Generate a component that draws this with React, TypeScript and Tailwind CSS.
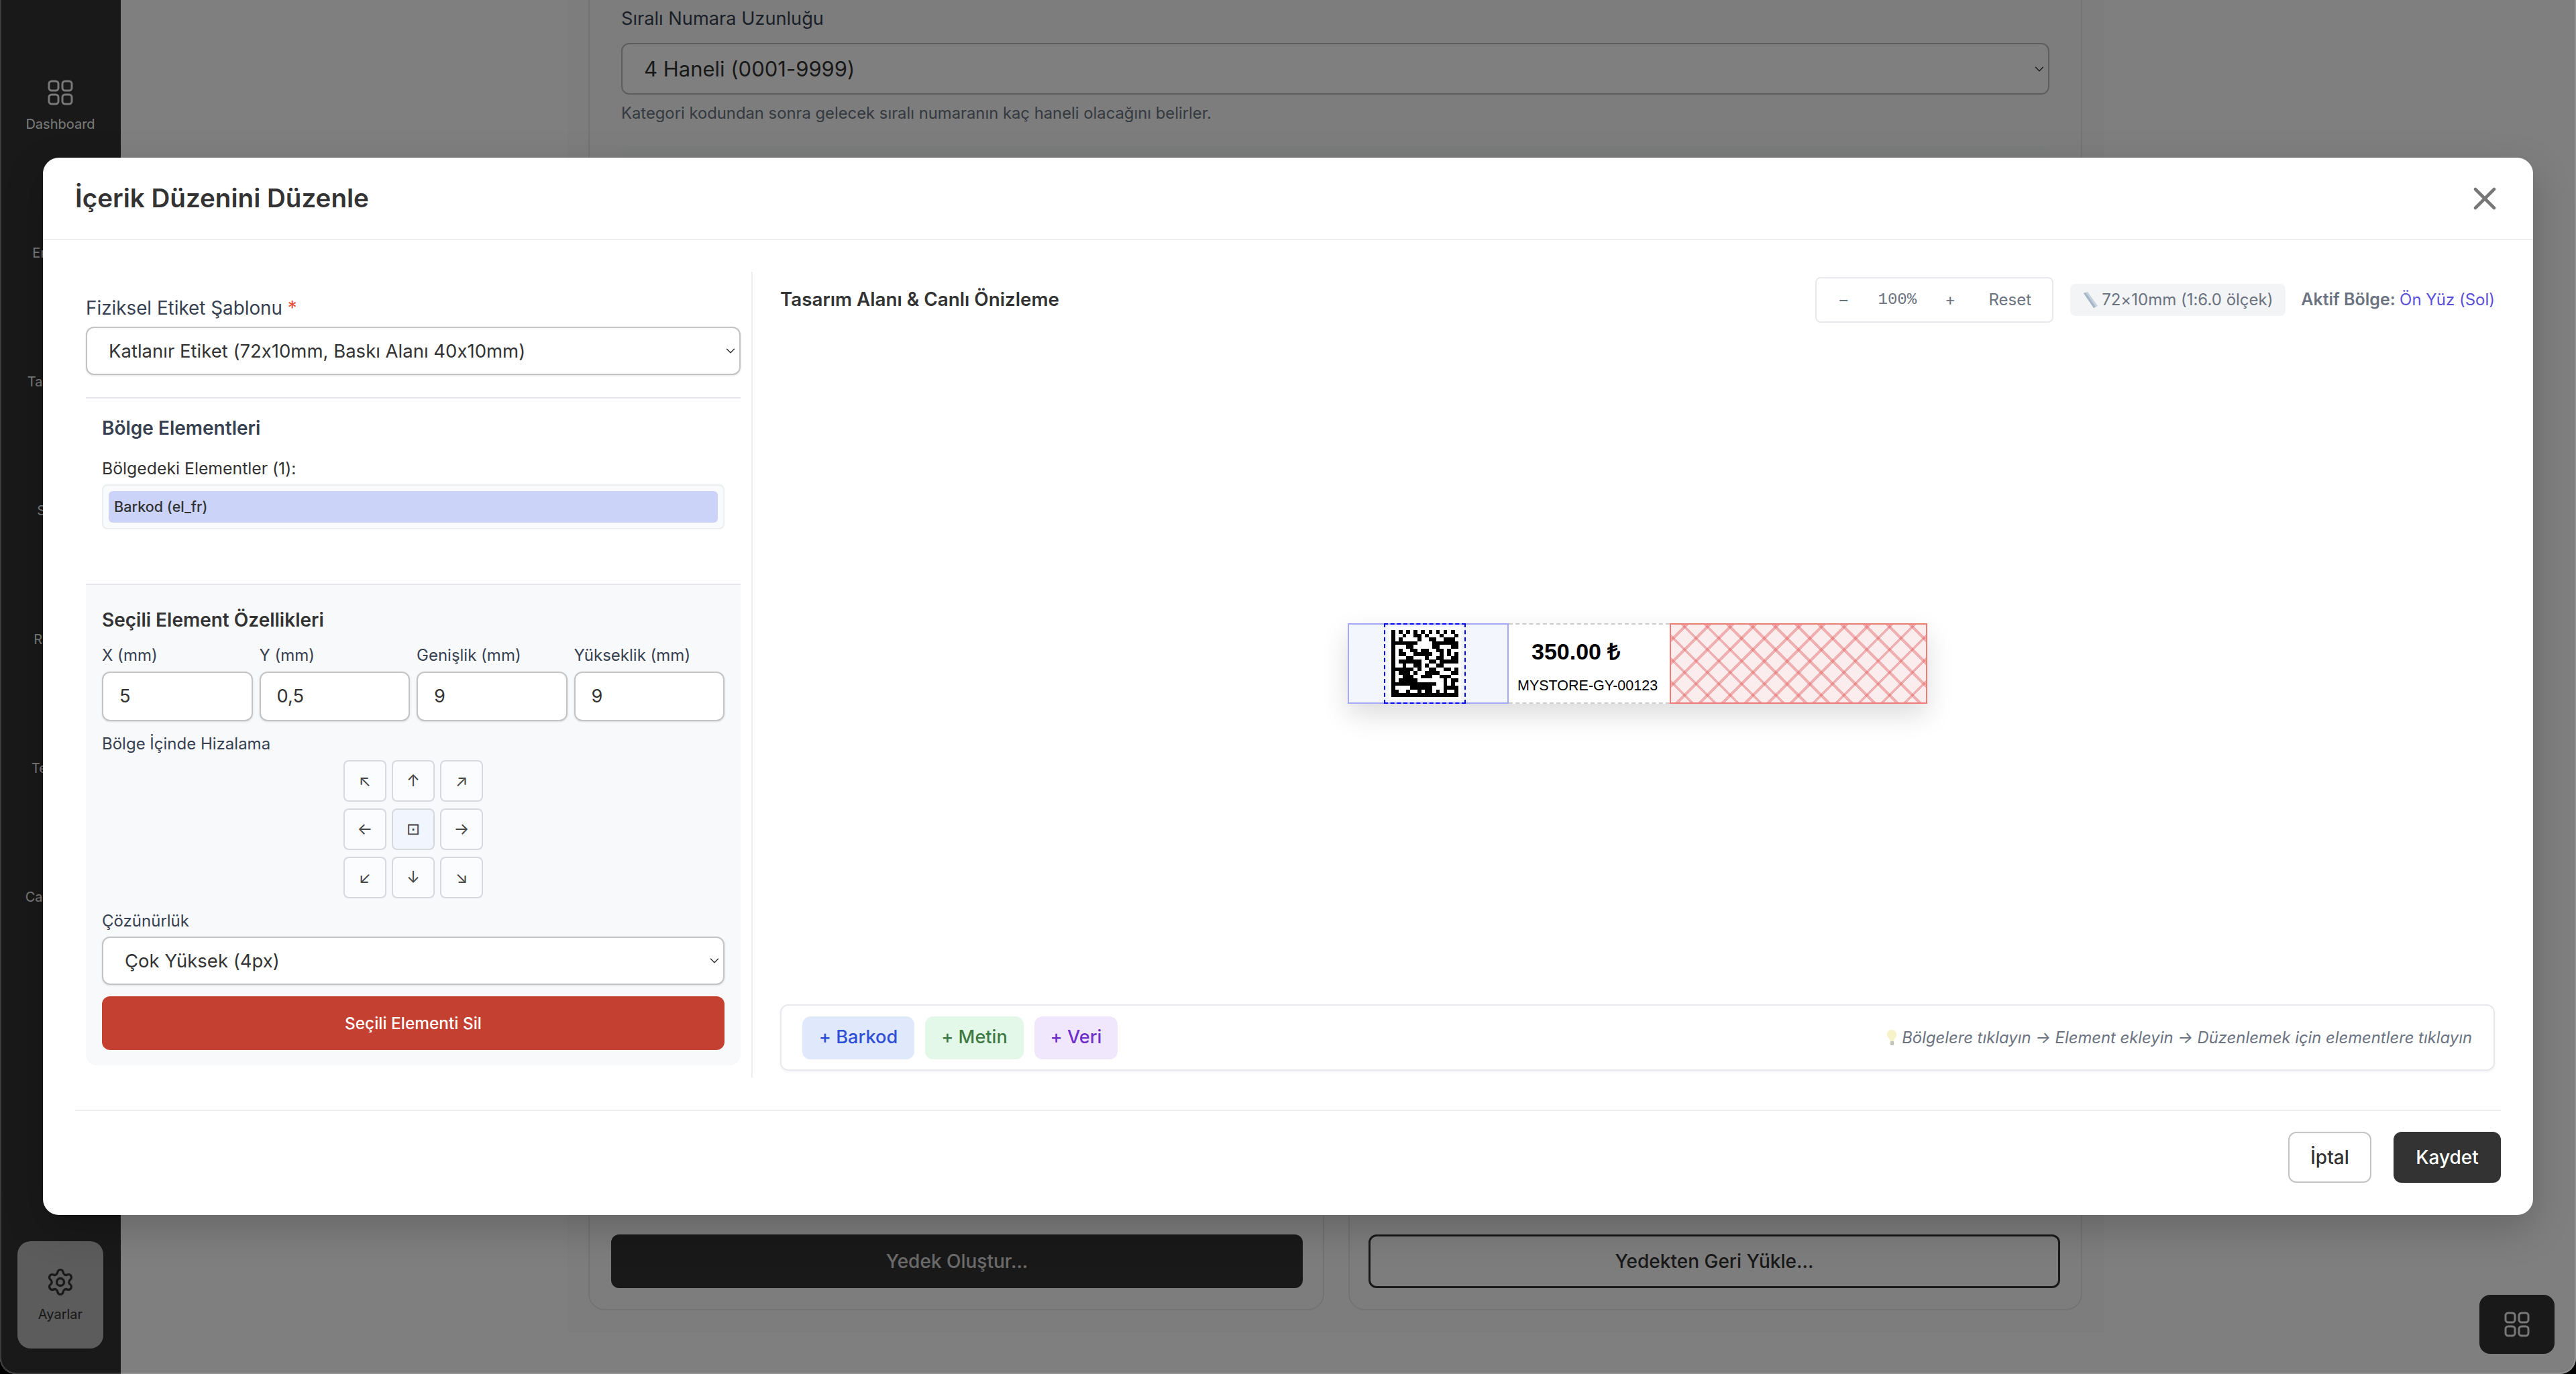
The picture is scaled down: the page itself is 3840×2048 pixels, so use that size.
import React from "react";
import { X, Settings, ChevronDown } from "lucide-react";

const matrix = [
  "101010101010101010",
  "100100110100010001",
  "101000010011001110",
  "111111100001111111",
  "100011000001100011",
  "101001101100110100",
  "101100111110010101",
  "100011000100110011",
  "101111110011011111",
  "100100110100110000",
  "111111010011001101",
  "101110100111100011",
  "100111001110011100",
  "101111100000001011",
  "111111111111001010",
  "100001111110001111",
  "110010010110101001",
  "111111111111111111",
];

function DataMatrix() {
  return (
    <svg width="100" height="100" viewBox="0 0 18 18" shapeRendering="crispEdges">
      {matrix.map((row, y) =>
        row.split("").map((c, x) => (c === "1" ? <rect key={x + "-" + y} x={x} y={y} width="1.02" height="1.02" fill="#000" /> : null))
      )}
    </svg>
  );
}

function GridIcon({ color = "#f0f0f0" }: { color?: string }) {
  return (
    <svg width="38" height="38" viewBox="0 0 38 38" fill="none" stroke={color} strokeWidth="3">
      <rect x="2" y="2" width="14" height="14" rx="4" />
      <rect x="22" y="2" width="14" height="14" rx="4" />
      <rect x="2" y="22" width="14" height="14" rx="4" />
      <rect x="22" y="22" width="14" height="14" rx="4" />
    </svg>
  );
}

function NavItem({ label }: { label: string }) {
  return (
    <div className="h-[192px] flex flex-col items-center justify-center gap-[16px]">
      <GridIcon />
      <span className="text-[20px] leading-[24px] text-[#f5f5f5] whitespace-nowrap">{label}</span>
    </div>
  );
}

function SelectBox({ text }: { text: string }) {
  return (
    <div className="h-[72px] w-full bg-white border-2 border-[#c4c4c4] rounded-[12px] flex items-center justify-between pl-[32px] pr-[2px] shadow-[0_1px_3px_rgba(0,0,0,0.12)]">
      <span className="text-[27.5px] pt-[2px] text-[#333]">{text}</span>
      <ChevronDown size={22} strokeWidth={1.6} className="text-[#333]" />
    </div>
  );
}

const arrows = ["↖", "↑", "↗", "←", "⊡", "→", "↙", "↓", "↘"];

function Field({ label, value }: { label: string; value: string }) {
  return (
    <div className="flex-1 min-w-0">
      <div className="text-[24px] leading-[28px] text-[#374151] whitespace-nowrap">{label}</div>
      <div className="mt-[10px] h-[74px] bg-white border-2 border-[#c4c4c4] rounded-[12px] flex items-center px-[24px] text-[27.2px] text-[#333] shadow-[0_1px_3px_rgba(0,0,0,0.12)]">
        {value}
      </div>
    </div>
  );
}

export default function App() {
  return (
    <div className="w-screen h-screen bg-black overflow-hidden font-['Inter','Noto_Sans',sans-serif] [font-feature-settings:'calt'_0]">
      <div className="relative w-full h-full rounded-b-[24px] overflow-hidden flex bg-white">
        {/* sidebar */}
        <aside className="w-[180px] h-full bg-[#333] flex flex-col pt-[62px] shrink-0">
          <NavItem label="Dashboard" />
          <NavItem label="Envanter" />
          <NavItem label="Tasarımlar" />
          <NavItem label="Satışlar" />
          <NavItem label="Raporlar" />
          <NavItem label="Tedarikçi" />
          <NavItem label="Cari Hesap" />
          <div className="mt-auto mb-[38px] mx-[26px] h-[160px] rounded-[20px] bg-[#b8b8b8] flex flex-col items-center justify-center gap-[14px] text-[#333]">
            <Settings size={44} strokeWidth={1.8} />
            <span className="text-[20px] leading-[24px]">Ayarlar</span>
          </div>
        </aside>

        {/* page behind */}
        <main className="flex-1 h-full">
          <div className="ml-[665px] w-[2291px] h-[1986px] bg-[#fafbfa] px-[32px] pb-[33px] flex flex-col justify-between">
            <div className="border-x-2 border-[#e5e7eb] px-[47px] pt-[10px] h-[300px]">
              <div className="text-[27.2px] leading-[36px] text-[#374151]">Sıralı Numara Uzunluğu</div>
              <div className="mt-[18px] h-[77px] border-2 border-[#bbb] rounded-[12px] flex items-center justify-between pl-[32px] pr-[2px] text-[31px] text-[#333] bg-white">
                <span className="pt-[2px]">4 Haneli (0001-9999)</span>
                <ChevronDown size={22} strokeWidth={1.6} />
              </div>
              <div className="mt-[14px] text-[23.8px] leading-[28px] text-[#6b7280]">Kategori kodundan sonra gelecek sıralı numaranın kaç haneli olacağını belirler.</div>
              <div className="mt-[34px] h-[80px] bg-[#f7f8f8] rounded-[12px]" />
            </div>
            <div className="flex gap-[36px] h-[300px]">
              <div className="flex-1 border-2 border-[#e5e7eb] rounded-[24px] pl-[32px] pr-[30px] flex flex-col justify-end pb-[31px]">
                <div className="h-[80px] rounded-[12px] bg-[#333] flex items-center justify-center text-[28px] font-medium text-white/80">Yedek Oluştur...</div>
              </div>
              <div className="flex-1 border-2 border-[#e5e7eb] rounded-[24px] pl-[28px] pr-[31px] flex flex-col justify-end pb-[31px]">
                <div className="h-[80px] rounded-[12px] border-[3px] border-[#333] flex items-center justify-center text-[28px] font-medium text-[#333]">Yedekten Geri Yükle...</div>
              </div>
            </div>
          </div>
        </main>

        <div className="absolute right-[32px] bottom-[30px] w-[112px] h-[88px] rounded-[16px] bg-[#333] flex items-center justify-center">
          <GridIcon />
        </div>

        {/* overlay */}
        <div className="absolute inset-0 bg-black/50 flex items-center justify-center pb-[2px]">
          <div className="w-[3712px] h-[1576px] bg-white rounded-[24px] flex flex-col shadow-[0_20px_60px_rgba(0,0,0,0.2)]">
            <header className="h-[123px] shrink-0 border-b-2 border-[#eeeeee] flex items-center justify-between pl-[48px] pr-[44px]">
              <h2 className="text-[38.6px] font-semibold text-[#333]">İçerik Düzenini Düzenle</h2>
              <X size={56} strokeWidth={2} className="text-[#777]" />
            </header>

            <div className="mx-[48px] mt-[47px] h-[1201px] flex shrink-0">
              {/* left column */}
              <div className="w-[1010px] shrink-0 border-r-2 border-[#eeeeee] px-[16px] pt-[37px]">
                <div className="text-[27.8px] leading-[34px] text-[#374151]">
                  Fiziksel Etiket Şablonu <span className="text-[#e74c3c]">*</span>
                </div>
                <div className="mt-[11px]">
                  <SelectBox text="Katlanır Etiket (72x10mm, Baskı Alanı 40x10mm)" />
                </div>
                <div className="mt-[33px] h-[278px] border-t-2 border-[#e5e7eb] px-[24px] pt-[27px]">
                  <div className="text-[28px] leading-[34px] font-semibold text-[#374151]">Bölge Elementleri</div>
                  <div className="mt-[28px] text-[24.8px] leading-[30px] text-[#333]">Bölgedeki Elementler (1):</div>
                  <div className="mt-[9px] h-[67px] border-2 border-[#eceef0] rounded-[8px] bg-[#f9fafb] p-[8px]">
                    <div className="h-[47px] rounded-[6px] bg-[#cbd3f9] flex items-center px-[8px] text-[21.6px] font-medium text-[#333]">Barkod (el_fr)</div>
                  </div>
                </div>
                <div className="border-t-2 border-[#e5e7eb] bg-[#f8f9fb] rounded-b-[16px] px-[24px] pt-[35px] pb-[23px]">
                  <div className="text-[28px] leading-[34px] font-semibold text-[#333]">Seçili Element Özellikleri</div>
                  <div className="mt-[22px] flex gap-[10px]">
                    <Field label="X (mm)" value="5" />
                    <Field label="Y (mm)" value="0,5" />
                    <Field label="Genişlik (mm)" value="9" />
                    <Field label="Yükseklik (mm)" value="9" />
                  </div>
                  <div className="mt-[20px] text-[24px] leading-[28px] text-[#374151]">Bölge İçinde Hizalama</div>
                  <div className="mt-[10px] grid grid-cols-[64px_64px_64px] auto-rows-[62px] gap-x-[8px] gap-y-[10px] justify-center">
                    {arrows.map((a, i) => (
                      <div key={a} className={`border-2 border-[#d5d8de] rounded-[8px] flex items-center justify-center text-[24px] text-[#444] ${i === 4 ? "bg-[#f1f5fe]" : "bg-[#fbfcfe]"}`}>
                        {a}
                      </div>
                    ))}
                  </div>
                  <div className="mt-[20px] text-[24px] leading-[28px] text-[#374151]">Çözünürlük</div>
                  <div className="mt-[9px]">
                    <SelectBox text="Çok Yüksek (4px)" />
                  </div>
                  <div className="mt-[17px] h-[80px] rounded-[12px] bg-[#c44030] flex items-center justify-center text-[24.4px] font-medium text-white">Seçili Elementi Sil</div>
                </div>
              </div>

              {/* right column */}
              <div className="flex-1 min-w-0 pl-[41px] pr-[9px] flex flex-col">
                <div className="mt-[8px] h-[68px] flex items-center justify-between shrink-0">
                  <div className="text-[27.8px] font-semibold text-[#333]">Tasarım Alanı &amp; Canlı Önizleme</div>
                  <div className="flex items-center">
                    <div className="w-[355px] h-[68px] border-2 border-[#e8e8ee] rounded-[8px] flex items-center text-[24px] text-[#6b7280]">
                      <span className="w-[80px] text-center">–</span>
                      <span className="w-[80px] text-center font-['Liberation_Mono',monospace]">100%</span>
                      <span className="w-[78px] text-center">+</span>
                      <span className="w-[100px] text-center">Reset</span>
                    </div>
                    <div className="ml-[25px] h-[48px] w-[321px] bg-[#f3f4f6] rounded-[8px] flex items-center justify-center gap-[4px] text-[24px] text-[#6b7280]">
                      <svg width="24" height="26" viewBox="0 0 24 26">
                        <polygon points="1,3 7,1 22,22 16,25" fill="#c4d0dc" />
                        <polygon points="1,3 4,2 19,23.5 16,25" fill="#a4b6c8" />
                      </svg>
                      <span>72×10mm (1:6.0 ölçek)</span>
                    </div>
                    <div className="ml-[23px] text-[24px] text-[#6b7280] whitespace-nowrap">
                      <span className="font-semibold text-[25px]">Aktif Bölge: </span>
                      <span className="text-[#5b4fd8]">Ön Yüz (Sol)</span>
                    </div>
                  </div>
                </div>

                <div className="flex-1 flex items-center justify-center">
                  <div className="w-[864px] h-[120px] flex shadow-[0_16px_40px_rgba(0,0,0,0.14)] bg-white">
                    <div className="relative w-[240px] bg-[#f3f6fd] border-2 border-[#a3a9f6]">
                      <div className="absolute left-[52px] top-[-2px] w-[122px] h-[120px] border-2 border-dashed border-[#0000ff] flex items-center justify-center">
                        <div className="w-[108px] h-[108px] bg-white flex items-center justify-center">
                          <DataMatrix />
                        </div>
                      </div>
                    </div>
                    <div className="relative w-[240px] bg-white border-y-2 border-dashed border-[#cccccc] font-['Liberation_Sans',Arial,sans-serif] text-black">
                      <div className="absolute left-[34px] top-[20px] text-[34px] leading-[40px] font-bold whitespace-nowrap">350.00 ₺</div>
                      <div className="absolute left-[13px] top-[78px] text-[21.5px] leading-[26px] whitespace-nowrap">MYSTORE-GY-00123</div>
                    </div>
                    <div className="w-[384px] border-2 border-[#ee7d78] bg-[#fbeced] bg-[repeating-linear-gradient(45deg,transparent,transparent_20px,rgba(225,85,85,0.4)_20px,rgba(225,85,85,0.4)_24px),repeating-linear-gradient(-45deg,transparent,transparent_20px,rgba(225,85,85,0.4)_20px,rgba(225,85,85,0.4)_24px)]" />
                  </div>
                </div>

                <div className="h-[99px] mb-[10px] shrink-0 border-2 border-[#e8e8ee] rounded-[12px] shadow-[0_2px_4px_rgba(0,0,0,0.05)] flex items-center justify-between pl-[31px] pr-[32px]">
                  <div className="flex gap-[16px]">
                    <div className="h-[64px] w-[167px] rounded-[12px] bg-[#dfe9fb] text-[#2f4fd6] text-[27.2px] font-medium flex items-center justify-center">+ Barkod</div>
                    <div className="h-[64px] w-[147px] rounded-[12px] bg-[#e3f8e9] text-[#3f7a45] text-[27.2px] font-medium flex items-center justify-center">+ Metin</div>
                    <div className="h-[64px] w-[124px] rounded-[12px] bg-[#f0e7fd] text-[#6f2fc9] text-[27.2px] font-medium flex items-center justify-center">+ Veri</div>
                  </div>
                  <div className="flex items-center gap-[6px] text-[23.8px] italic text-[#6b7280] whitespace-nowrap">
                    <svg width="18" height="26" viewBox="0 0 18 26">
                      <path d="M9 1c5 0 7 3 7 7 0 4-3 6-4 10H7C6 14 2 12 2 8c0-4 2-7 7-7z" fill="#f8f2c8" />
                      <rect x="7" y="18" width="5" height="6" fill="#c4c4b8" />
                    </svg>
                    <span>Bölgelere tıklayın → Element ekleyin → Düzenlemek için elementlere tıklayın</span>
                  </div>
                </div>
              </div>
            </div>

            <footer className="mx-[48px] mt-[48px] border-t-2 border-[#eeeeee] pt-[31px] flex justify-end gap-[33px]">
              <div className="w-[124px] h-[76px] border-2 border-[#c4c4c4] rounded-[12px] flex items-center justify-center text-[28px] font-medium text-[#333]">İptal</div>
              <div className="w-[160px] h-[76px] rounded-[12px] bg-[#333] flex items-center justify-center text-[28px] font-medium text-white">Kaydet</div>
            </footer>
          </div>
        </div>
        <div className="absolute inset-0 rounded-b-[24px] border-2 border-t-0 border-white/15 pointer-events-none" />
      </div>
    </div>
  );
}
